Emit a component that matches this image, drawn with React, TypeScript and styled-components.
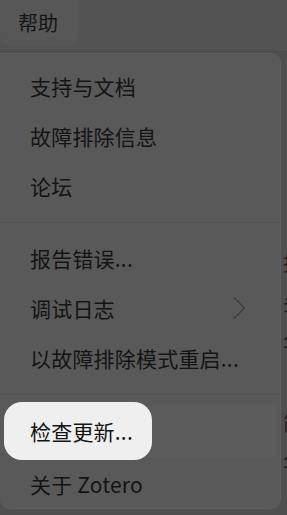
import React from 'react';
import styled, { createGlobalStyle } from 'styled-components';

const GlobalStyle = createGlobalStyle`
  html, body {
    margin: 0;
    padding: 0;
    background: #4f4f4f;
    font-family: "Noto Sans CJK SC", "Noto Sans", sans-serif;
    overflow: hidden;
  }
`;

type Entry =
  | { kind: 'item'; label: string; sub?: boolean; active?: boolean }
  | { kind: 'sep' };

const entries: Entry[] = [
  { kind: 'item', label: '支持与文档' },
  { kind: 'item', label: '故障排除信息' },
  { kind: 'item', label: '论坛' },
  { kind: 'sep' },
  { kind: 'item', label: '报告错误...' },
  { kind: 'item', label: '调试日志', sub: true },
  { kind: 'item', label: '以故障排除模式重启...' },
  { kind: 'sep' },
  { kind: 'item', label: '检查更新...', active: true },
  { kind: 'item', label: '关于 Zotero' },
];

// bits of the window behind the menu, only the first pixels show
const behind = ['报', '头', '华', '', '简', '华'];

const Chevron = () => (
  <svg width="14" height="24" viewBox="0 0 14 24" fill="none">
    <path d="M1.5 1 L12.5 12 L1.5 23" stroke="#3e3e3e" strokeWidth="1.3" />
  </svg>
);

export default function App() {
  return (
    <Page>
      <GlobalStyle />
      <MenuBar>
        <MenuButton>帮助</MenuButton>
      </MenuBar>
      <Body>
        <Popup>
          {entries.map((e, i) =>
            e.kind === 'sep' ? (
              <Separator key={i} />
            ) : (
              <Item key={i} $active={e.active}>
                {e.active && <Spotlight>{e.label}</Spotlight>}
                <Label>{e.label}</Label>
                {e.sub && <Chevron />}
              </Item>
            )
          )}
        </Popup>
        <Behind>
          {behind.map((c, i) => (
            <BehindChar key={i} $red={i === 0 || i === 4}>
              {c}
            </BehindChar>
          ))}
        </Behind>
      </Body>
    </Page>
  );
}

const Page = styled.div`
  width: 287px;
  height: 515px;
  display: flex;
  flex-direction: column;
  background: #4f4f4f;
`;

const MenuBar = styled.div`
  height: 52px;
  display: flex;
  align-items: flex-start;
  background: #535353;
  border-bottom: 1px solid #4a4a4a;
  box-sizing: border-box;
`;

const MenuButton = styled.div`
  width: 78px;
  height: 45px;
  box-sizing: border-box;
  padding-left: 18px;
  display: flex;
  align-items: center;
  font-size: 20px;
  color: #151515;
  background: #575757;
  border-radius: 0 0 8px 8px;
`;

const Body = styled.div`
  flex: 1;
  display: flex;
  padding-top: 1px;
  min-height: 0;
`;

const Popup = styled.div`
  width: 281px;
  height: 456px;
  box-sizing: border-box;
  padding: 7px 4px 0 6px;
  background: #595959;
  border: 1px solid #5e5e5e;
  border-left: none;
  border-radius: 0 10px 10px 10px;
  display: flex;
  flex-direction: column;
  flex-shrink: 0;
`;

const Item = styled.div<{ $active?: boolean }>`
  position: relative;
  height: 50px;
  flex-shrink: 0;
  display: flex;
  align-items: center;
  justify-content: space-between;
  padding: 0 30px 0 24px;
  border-radius: 4px;
  background: ${(p) => (p.$active ? '#5c5c5c' : 'transparent')};
  ${(p) => (p.$active ? 'height: 53px; margin: 0 0 1px;' : '')}
`;

const Label = styled.span`
  font-size: 21px;
  color: #141414;
  white-space: nowrap;
  letter-spacing: 0.2px;
`;

const Spotlight = styled.div`
  position: absolute;
  left: -2px;
  top: -3px;
  width: 148px;
  height: 58px;
  box-sizing: border-box;
  padding-left: 26px;
  display: flex;
  align-items: center;
  background: #efefef;
  border-radius: 18px;
  font-size: 21px;
  color: #141414;
  letter-spacing: 0.2px;
  white-space: nowrap;
  z-index: 1;
`;

const Separator = styled.div`
  height: 22px;
  flex-shrink: 0;
  display: flex;
  align-items: center;
  margin: 0 -4px 0 -6px;
  &::after {
    content: '';
    flex: 1;
    height: 1px;
    background: #545454;
  }
`;

const Behind = styled.div`
  flex: 1;
  overflow: hidden;
  padding-top: 190px;
  padding-left: 2px;
  display: flex;
  flex-direction: column;
`;

const BehindChar = styled.div<{ $red?: boolean }>`
  height: 40px;
  font-size: 20px;
  line-height: 40px;
  color: ${(p) => (p.$red ? '#2a1a1a' : '#1c1c1c')};
`;
